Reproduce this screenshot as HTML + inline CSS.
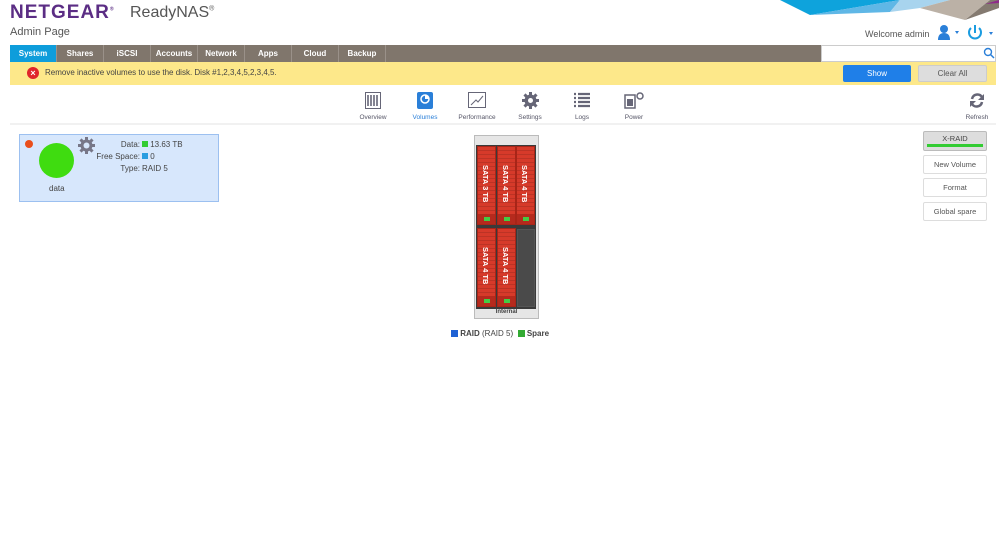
<!DOCTYPE html><html><head><style>
body{margin:0;width:999px;height:546px;background:#fff;font-family:"Liberation Sans",sans-serif;position:relative;overflow:hidden}
.a{position:absolute}
*{box-sizing:border-box}
.tab{position:absolute;top:45px;height:17px;width:47px;border-right:1px solid #9a9189;color:#fff;font-size:8px;font-weight:bold;text-align:center;line-height:17px}
.ic{position:absolute;top:92px;width:44px;text-align:center;font-size:6.5px;color:#556}
.ic svg{display:block;margin:0 auto 5px}
.btn{position:absolute;left:923px;width:64px;height:19px;border:1px solid #ddd;border-radius:2px;font-size:7.5px;color:#555;text-align:center;line-height:17px;background:#fff}
.disk{position:absolute;width:19px;height:79px;background:#d63a2a;border:1px solid #a82518;background-image:repeating-linear-gradient(180deg,transparent 0 3px,rgba(0,0,0,.12) 3px 4px)}
.disk span{position:absolute;left:3px;top:18px;writing-mode:vertical-rl;color:#fff;font-size:7.5px;font-weight:bold}
.disk i{position:absolute;left:0;right:0;bottom:0;height:10px;background:#b52a1d}
.disk i:after{content:"";position:absolute;left:6px;top:3px;width:6px;height:4px;background:#4c4}
</style></head><body>
<svg class="a" style="left:760px;top:0" width="239" height="22"><polygon points="20,0 140,0 50,15" fill="#0ea3dc"/><polygon points="50,15 140,0 130,12" fill="#5fb7e6"/><polygon points="140,0 190,0 160,8 130,12" fill="#a8d4ee"/><polygon points="160,8 190,0 230,0 205,20" fill="#bbb1a6"/><polygon points="205,20 230,0 239,0 239,8" fill="#847a70"/><polygon points="225,4 239,0 239,3" fill="#8e2a8a"/></svg>
<div class="a" style="left:10px;top:2px;font-size:19px;font-weight:bold;color:#5b2d84;letter-spacing:1px">NETGEAR<sup style="font-size:5px">®</sup></div>
<div class="a" style="left:130px;top:4px;font-size:16px;color:#555">ReadyNAS<sup style="font-size:7px">®</sup></div>
<div class="a" style="left:10px;top:26px;font-size:11px;color:#555">Admin Page</div>
<div class="a" style="left:865px;top:29px;font-size:9px;color:#555">Welcome admin</div>
<svg class="a" style="left:937px;top:24px" width="60" height="18"><circle cx="7" cy="5" r="4" fill="#2a7fd8"/><path d="M1 16 Q1 9 7 9 Q13 9 13 16Z" fill="#2a7fd8"/><polygon points="18,7 22,7 20,10" fill="#2a7fd8"/><path d="M34 4 A6 6 0 1 0 42 4" stroke="#1b9ce0" stroke-width="2" fill="none"/><line x1="38" y1="1" x2="38" y2="9" stroke="#1b9ce0" stroke-width="2"/><polygon points="52,8 56,8 54,11" fill="#2a7fd8"/></svg>
<div class="a" style="left:10px;top:45px;width:986px;height:17px;background:#80766c"></div>
<div class="tab" style="left:10px;background:#0e9ddb">System</div>
<div class="tab" style="left:57px">Shares</div><div class="tab" style="left:104px">iSCSI</div><div class="tab" style="left:151px">Accounts</div><div class="tab" style="left:198px">Network</div><div class="tab" style="left:245px">Apps</div><div class="tab" style="left:292px">Cloud</div><div class="tab" style="left:339px">Backup</div>
<div class="a" style="left:821px;top:45px;width:175px;height:17px;background:#fff;border:1px solid #ccc"></div>
<svg class="a" style="left:983px;top:47px" width="12" height="12"><circle cx="5" cy="5" r="3.5" stroke="#2a7fd8" stroke-width="1.4" fill="none"/><line x1="7.5" y1="7.5" x2="11" y2="11" stroke="#2a7fd8" stroke-width="1.5"/></svg>
<div class="a" style="left:10px;top:62px;width:986px;height:23px;background:#fde88a"></div>
<div class="a" style="left:27px;top:67px;width:12px;height:12px;border-radius:50%;background:#e0252b;color:#fff;font-size:9px;line-height:12px;text-align:center;font-weight:bold">×</div>
<div class="a" style="left:45px;top:68px;font-size:8px;color:#444">Remove inactive volumes to use the disk. Disk #1,2,3,4,5,2,3,4,5.</div>
<div class="a" style="left:843px;top:65px;width:68px;height:17px;background:#1f7fe8;border-radius:2px;color:#fff;font-size:8px;text-align:center;line-height:17px">Show</div>
<div class="a" style="left:918px;top:65px;width:69px;height:17px;background:#ddd;border:1px solid #ccc;border-radius:2px;color:#555;font-size:8px;text-align:center;line-height:15px">Clear All</div>
<div class="ic" style="left:351px"><svg width="16" height="17"><rect x=".5" y=".5" width="15" height="16" fill="#fff" stroke="#667"/><path d="M3 3v11M6 3v11M9 3v11M12 3v11" stroke="#667" stroke-width="1.6"/></svg>Overview</div>
<div class="ic" style="left:403px;color:#2a7fd8"><svg width="16" height="17"><rect width="16" height="17" rx="2" fill="#2a7fd8"/><circle cx="8" cy="7" r="4" fill="none" stroke="#fff" stroke-width="1.5"/><path d="M8 7V3A4 4 0 0 1 12 7Z" fill="#fff"/></svg>Volumes</div>
<div class="ic" style="left:455px"><svg width="18" height="17"><rect x=".5" y=".5" width="17" height="15" fill="#fff" stroke="#667"/><path d="M3 13L8 8L10 10L15 4" stroke="#667" fill="none"/></svg>Performance</div>
<div class="ic" style="left:508px"><svg width="17" height="17" viewBox="-8.5 -8.5 17 17"><g fill="#667"><circle r="6"/><path d="M-1.5-8.5h3v17h-3zM-8.5-1.5h17v3h-17z"/><path d="M-1.5-8.5h3v17h-3zM-8.5-1.5h17v3h-17z" transform="rotate(45)"/></g><circle r="2.5" fill="#fff"/></svg>Settings</div>
<div class="ic" style="left:560px"><svg width="16" height="17"><path d="M0 2h2M4 2h12M0 6h2M4 6h12M0 10h2M4 10h12M0 14h2M4 14h12" stroke="#667" stroke-width="2.2"/></svg>Logs</div>
<div class="ic" style="left:612px"><svg width="20" height="17"><path d="M1 3h10v13H1z" fill="#fff" stroke="#667" stroke-width="1.5"/><rect x="3" y="7" width="6" height="7" fill="#667"/><circle cx="16" cy="4" r="3" fill="#fff" stroke="#667" stroke-width="1.5"/></svg>Power</div>
<div class="ic" style="left:955px"><svg width="16" height="17"><path d="M3 7A5.5 5.5 0 0 1 13 5" stroke="#667" stroke-width="2.5" fill="none"/><path d="M15 2v6h-6z" fill="#667"/><path d="M13 10A5.5 5.5 0 0 1 3 12" stroke="#667" stroke-width="2.5" fill="none"/><path d="M1 15V9h6z" fill="#667"/></svg>Refresh</div>
<div class="a" style="left:10px;top:123px;width:986px;height:2px;background:#f1f1f1"></div>
<div class="a" style="left:19px;top:134px;width:200px;height:68px;background:#d7e7fc;border:1px solid #9cc0f0"></div>
<div class="a" style="left:25px;top:140px;width:8px;height:8px;border-radius:50%;background:#e94e1b"></div>
<div class="a" style="left:39px;top:143px;width:35px;height:35px;border-radius:50%;background:#3fdc10"></div>
<div class="a" style="left:49px;top:184px;font-size:8px;color:#444">data</div>
<svg class="a" style="left:78px;top:137px" width="17" height="17" viewBox="-8.5 -8.5 17 17"><g fill="#778"><circle r="6"/><path d="M-1.5-8.5h3v17h-3zM-8.5-1.5h17v3h-17z"/><path d="M-1.5-8.5h3v17h-3zM-8.5-1.5h17v3h-17z" transform="rotate(45)"/></g><circle r="3" fill="#d7e7fc"/></svg>
<div class="a" style="left:90px;top:139px;font-size:8px;color:#444;line-height:12px;text-align:right;width:50px">Data:<br>Free Space:<br>Type:</div>
<div class="a" style="left:142px;top:139px;font-size:8px;color:#444;line-height:12px"><span style="display:inline-block;width:6px;height:6px;background:#3c3"></span> 13.63 TB<br><span style="display:inline-block;width:6px;height:6px;background:#2a9de0"></span> 0<br>RAID 5</div>
<div class="a" style="left:474px;top:135px;width:65px;height:184px;background:#e6e6e6;border:1px solid #bbb"></div>
<div class="a" style="left:476px;top:145px;width:60px;height:164px;background:#3a3a3a"></div>
<div class="disk" style="left:477px;top:146px"><span>SATA 3 TB</span><i></i></div>
<div class="disk" style="left:497px;top:146px"><span>SATA 4 TB</span><i></i></div>
<div class="disk" style="left:516px;top:146px"><span>SATA 4 TB</span><i></i></div>
<div class="disk" style="left:477px;top:228px"><span>SATA 4 TB</span><i></i></div>
<div class="disk" style="left:497px;top:228px"><span>SATA 4 TB</span><i></i></div>
<div class="a" style="left:517px;top:229px;width:18px;height:78px;background:#4a4a4a;border:1px solid #555"></div>
<div class="a" style="left:474px;top:309px;width:65px;font-size:6px;font-weight:bold;color:#444;text-align:center">Internal</div>
<div class="a" style="left:451px;top:329px;font-size:8px;color:#444"><span style="display:inline-block;width:7px;height:7px;background:#1f62d4;vertical-align:-1px"></span> <b>RAID</b> (RAID 5) &nbsp;<span style="display:inline-block;width:7px;height:7px;background:#3a3;vertical-align:-1px"></span> <b>Spare</b></div>
<div class="btn" style="top:131px;background:#ddd;border-color:#bbb;height:20px;line-height:14px;color:#444">X-RAID<div style="position:absolute;left:3px;right:3px;bottom:3px;height:3px;background:#3c3"></div></div>
<div class="btn" style="top:155px">New Volume</div>
<div class="btn" style="top:178px">Format</div>
<div class="btn" style="top:202px">Global spare</div>
</body></html>
